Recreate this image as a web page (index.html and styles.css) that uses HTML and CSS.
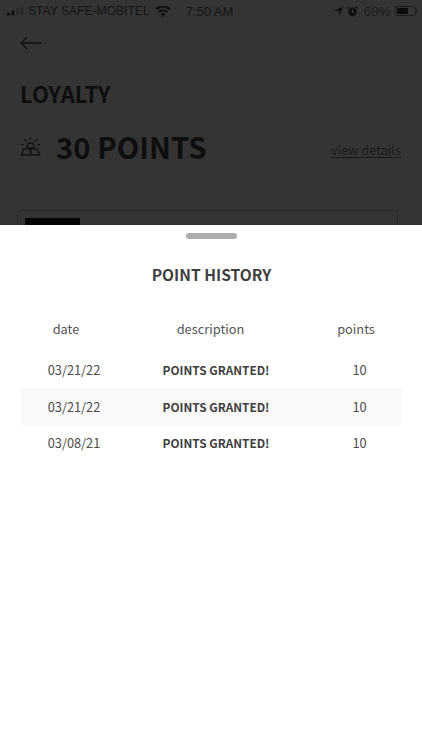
FILE: index.html
```html
<!DOCTYPE html>
<html lang="en">
<head>
<meta charset="utf-8">
<title>Point history</title>
<link rel="stylesheet" href="styles.css">
</head>
<body>
<div class="screen">
  <div class="backdrop">
    <div class="status">
      <div class="status-left">
        <svg class="signal" width="17" height="10" viewBox="0 0 17 10"><rect x="0" y="6.5" width="3" height="3" rx=".6" fill="#111"/><rect x="4.5" y="4.5" width="3" height="5" rx=".6" fill="#111"/><rect x="9" y="2" width="3" height="7.5" rx=".6" fill="#2a2a2a"/><rect x="13.5" y="0" width="3" height="9.5" rx=".6" fill="#2a2a2a"/></svg>
        <span class="carrier">STAY SAFE-MOBITEL</span>
        <svg class="wifi" width="16" height="11" viewBox="0 0 16 11"><path d="M8 11 5.6 8.2a3.4 3.4 0 0 1 4.8 0Z M4.5 7 3 5.3a7 7 0 0 1 10 0L11.5 7a5 5 0 0 0-7 0Z M1.9 4.2 .3 2.5a11 11 0 0 1 15.4 0L14.1 4.2a8.6 8.6 0 0 0-12.2 0Z" fill="#111"/></svg>
        <span class="time">7:50 AM</span>
      </div>
      <div class="status-right">
        <svg width="11" height="11" viewBox="0 0 10 10"><path d="M9.5.5 5.4 9.5V4.6H.5Z" fill="#111"/></svg>
        <svg width="11" height="11" viewBox="0 0 11 11"><circle cx="5.5" cy="6" r="4.4" fill="#111"/><path d="M5.5 3.5V6L7 7" stroke="#444" fill="none"/><path d="M.6 2.6 2.4.8M10.4 2.6 8.6.8" stroke="#111" stroke-width="1.4"/></svg>
        <span class="battery-pct">68%</span>
        <div class="battery"><div class="battery-fill"></div></div>
        <div class="battery-cap"></div>
      </div>
    </div>
    <svg class="back" width="22" height="14" viewBox="0 0 22 14"><path d="M21.5 7H1.2M7 1 1 7l6 6" fill="none" stroke="#111" stroke-width="1.3"/></svg>
    <h1 class="title">LOYALTY</h1>
    <div class="points-row">
      <svg class="gold" width="21" height="19" viewBox="0 0 22 20" fill="none" stroke="#111" stroke-width="1.5"><path d="M11 0v3M4.2 2.6l1.9 2M17.8 2.6l-1.9 2M1 8h2.6M18.4 8H21"/><path d="M8.3 6.5h5.4l1.1 5H7.2Z"/><path d="M3.7 12.5h6.6l1 6.5H1.4ZM11.7 12.5h6.6l2.3 6.5h-9.9Z"/></svg>
      <span class="points">30 POINTS</span>
      <a class="details">view details</a>
    </div>
    <div class="card">
      <div class="card-thumb"></div>
      <div class="card-name">UNIVERSAL STORES</div>
    </div>
  </div>
  <div class="sheet">
    <div class="handle"></div>
    <h2 class="sheet-title">POINT HISTORY</h2>
    <div class="row head"><span>date</span><span>description</span><span>points</span></div>
    <div class="row"><span>03/21/22</span><b>POINTS GRANTED!</b><span class="pts">10</span></div>
    <div class="row alt"><span>03/21/22</span><b>POINTS GRANTED!</b><span class="pts">10</span></div>
    <div class="row"><span>03/08/21</span><b>POINTS GRANTED!</b><span class="pts">10</span></div>
  </div>
</div>
</body>
</html>
```
FILE: styles.css
```css
* { box-sizing: border-box; }
html, body { margin: 0; height: 100%; }
body { font-family: "Noto Sans CJK SC", "Noto Sans", sans-serif; background: #fff; overflow: hidden; }
.screen { display: flex; flex-direction: column; height: 750px; width: 422px; }
.backdrop { height: 225px; flex: none; overflow: hidden; background: #343434; color: #111; }
.status { display: flex; justify-content: space-between; align-items: center; height: 22px; padding: 0 5px 0 7px; font-family: "Liberation Sans", sans-serif; font-size: 13px; color: #141414; }
.status-left, .status-right { display: flex; align-items: center; }
.carrier { margin-left: 4px; font-size: 12.1px; }
.wifi { margin-left: 5px; }
.time { margin-left: 15px; }
.status-right { gap: 3px; }
.battery-pct { color: #1c1c1c; margin-left: 2px; font-size: 13.5px; }
.battery { width: 21px; height: 10px; border: 1px solid #1c1c1c; border-radius: 3px; padding: 1px; margin-left: 1px; }
.battery-fill { width: 68%; height: 100%; background: #0c0c0c; border-radius: 1px; }
.battery-cap { width: 1.5px; height: 4px; background: #1c1c1c; margin-left: -3px; }
.back { display: block; margin: 14px 0 0 20px; }
.title { margin: 28px 0 0 20px; font-size: 22px; line-height: 30px; font-weight: 700; color: #0e0e0e; }
.points-row { display: flex; align-items: center; margin: 16px 21px 0 20px; height: 44px; }
.gold { flex: none; }
.points { margin-left: 15px; font-size: 29.3px; line-height: 44px; font-weight: 700; color: #0e0e0e; }
.details { margin-left: auto; margin-top: 8px; font-size: 12.8px; line-height: 22px; color: #1a1a1a; text-decoration: underline; text-underline-offset: 2px; }
.card { display: flex; margin: 42px 24px 0 17px; height: 60px; padding: 7px; border: 1px solid #282828; border-radius: 4px; }
.card-thumb { width: 55px; height: 50px; background: #060606; }
.card-name { margin: 1px 0 0 78px; font-size: 16px; line-height: 22px; font-weight: 700; color: #222; letter-spacing: 2px; white-space: nowrap; }
.sheet { flex: 1; background: #fff; padding: 0 20px 0 21px; }
.handle { width: 51px; height: 6px; margin: 8px auto 0; background: #adadad; border-radius: 3px; }
.sheet-title { margin: 22px 0 24px; text-align: center; font-size: 15.6px; line-height: 26px; font-weight: 700; color: #3f3f3f; }
.row { display: grid; grid-template-columns: 106px 178px 1fr; align-items: center; height: 36.4px; font-size: 12.8px; line-height: 18px; color: #4c4c4c; text-align: center; }
.row.head { grid-template-columns: 90px 199px 1fr; height: 36px; margin-bottom: 5px; color: #555; }
.pts { padding-left: 12px; }
.row b { font-size: 11.8px; font-weight: 700; color: #3f3f3f; }
.alt { background: #faf8f9; }
```
